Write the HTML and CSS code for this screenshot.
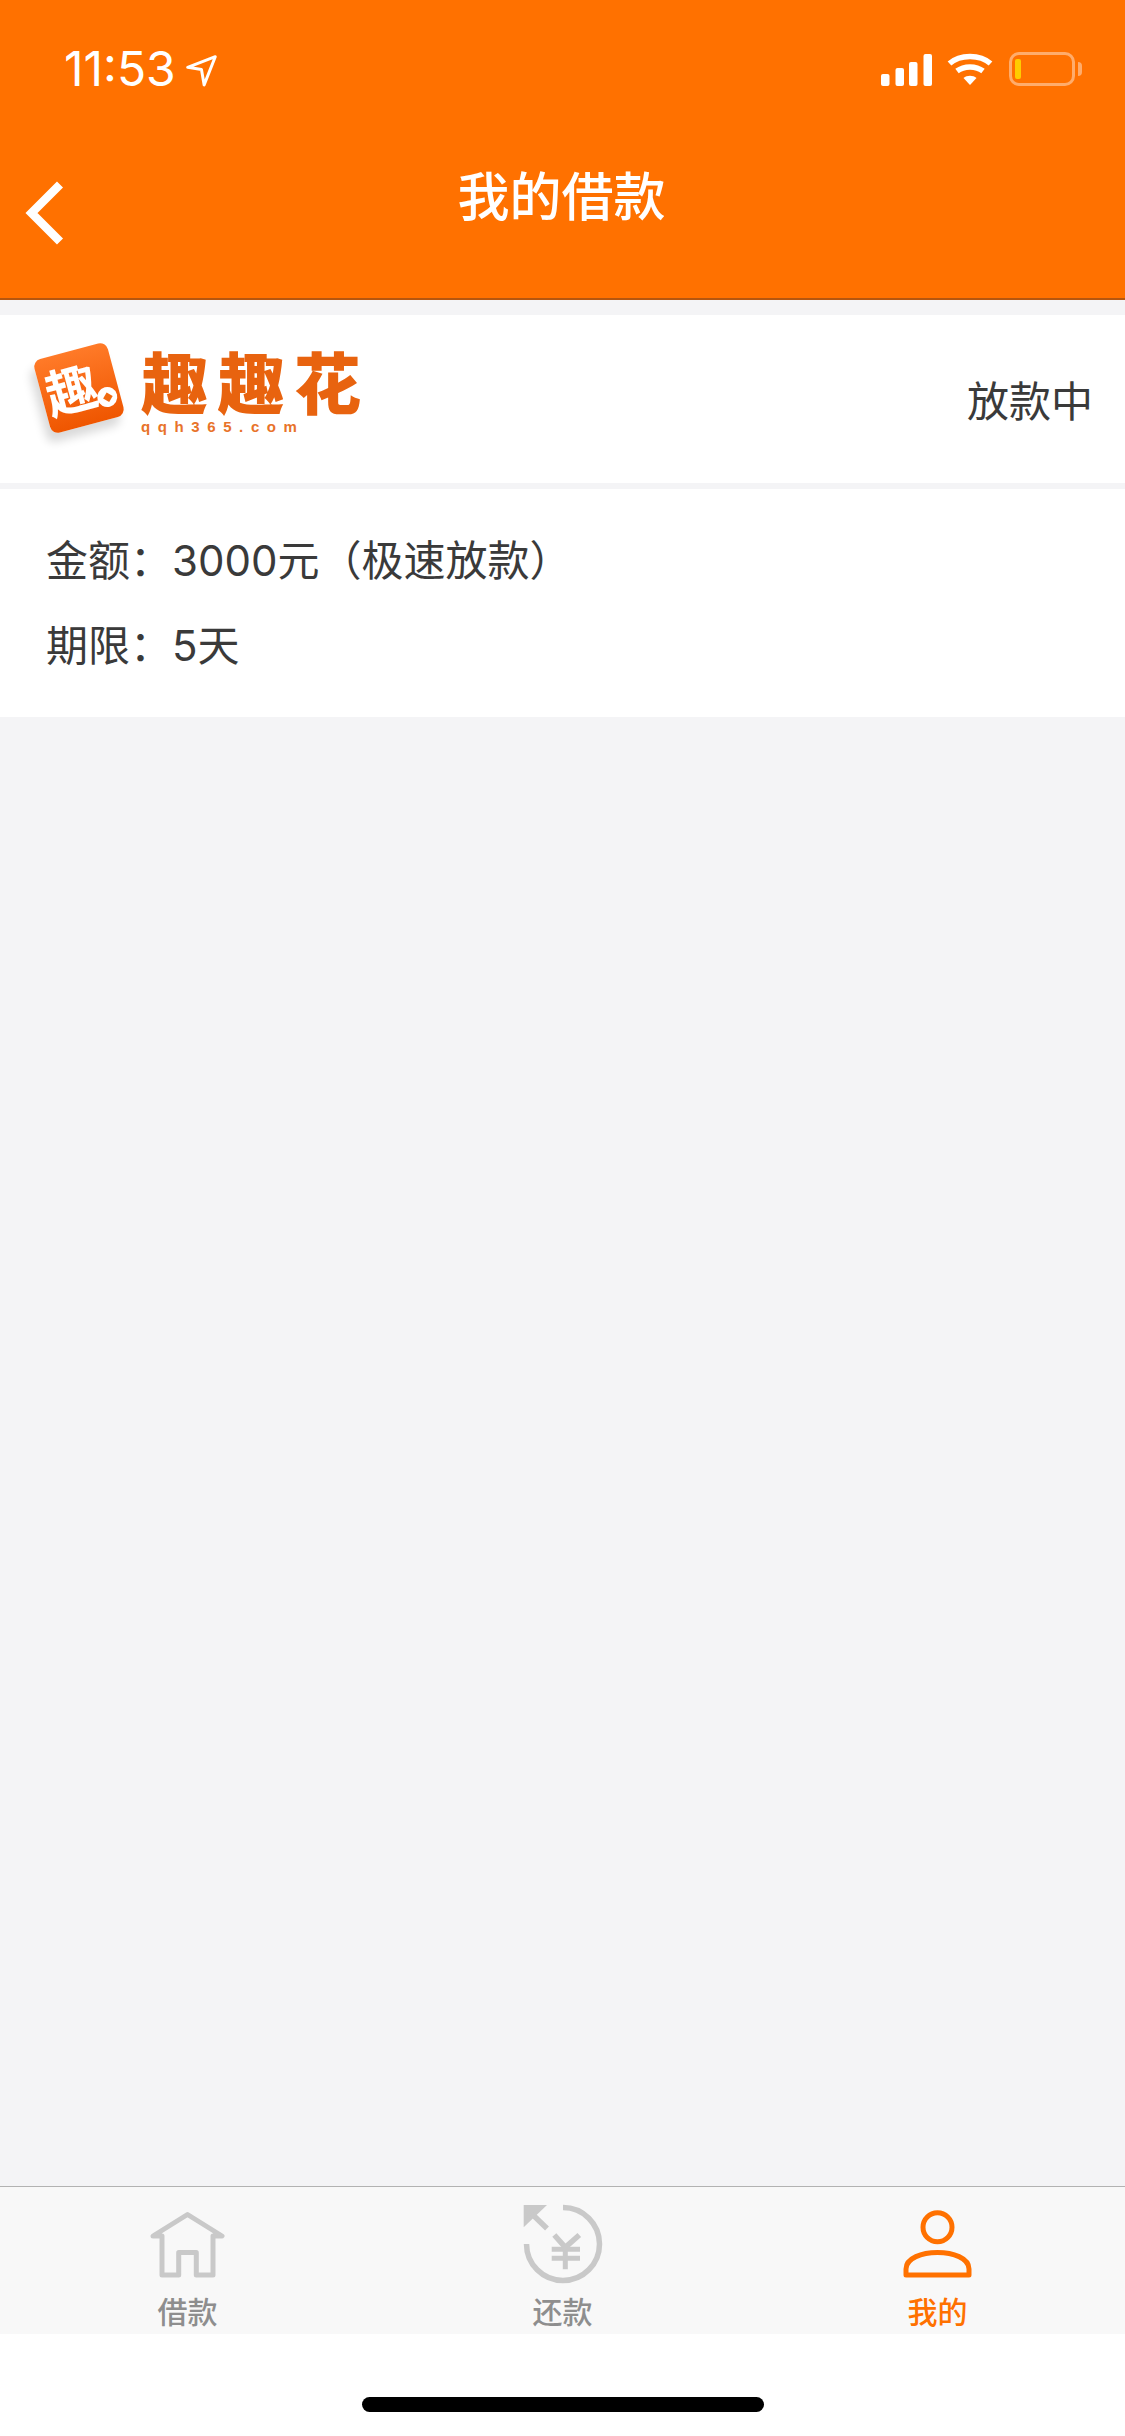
FILE: index.html
```html
<!DOCTYPE html>
<html lang="zh">
<head>
<meta charset="utf-8">
<title>我的借款</title>
<link rel="stylesheet" href="styles.css">
</head>
<body>
<div class="app">
  <header class="header">
    <div class="status">
      <div class="time-wrap">
        <span class="time">11:53</span>
        <svg class="loc" width="34" height="34" viewBox="0 0 32 32"><path d="M2.500 13.500 L28.500 3.500 L18 30 L15.500 15.500 Z" fill="none" stroke="#fff" stroke-width="2.800" stroke-linejoin="round"/></svg>
      </div>
      <div class="indicators">
        <svg class="signal" width="51" height="32" viewBox="0 0 51 32" fill="#fff"><rect x="0" y="20" width="8.500" height="12" rx="2"/><rect x="14.500" y="14" width="8.500" height="18" rx="2"/><rect x="28" y="8" width="8.500" height="24" rx="2"/><rect x="42.500" y="0" width="8.500" height="32" rx="2"/></svg>
        <svg class="wifi" width="46" height="34" viewBox="0 0 46 34" fill="none" stroke="#fff" stroke-width="5.500"><path d="M2.500 11.500 C13 2 33 2 43.500 11.500"/><path d="M10 19 C17 13.500 29 13.500 36 19"/><path d="M16.500 26 L23 33 L29.500 26 C26 23 20 23 16.500 26 Z" fill="#fff" stroke="none"/></svg>
        <div class="battery"><div class="battery-body"><div class="battery-fill"></div></div><div class="battery-nub"></div></div>
      </div>
    </div>
    <div class="nav">
      <svg class="back" width="44" height="70" viewBox="0 0 44 70" fill="none"><path d="M37 4.500 L8.500 33 L37 61.500" stroke="#fff" stroke-width="8.500"/></svg>
      <h1 class="title">我的借款</h1>
      <div></div>
    </div>
  </header>

  <main class="main">
    <section class="brand-row">
      <div class="logo">
        <div class="logo-mark">
          <span class="logo-mark-char">趣</span>
          <span class="logo-coin"><span class="logo-coin-hole"></span></span>
        </div>
        <div class="logo-words">
          <div class="logo-name">趣趣花</div>
          <div class="logo-url">qqh365.com</div>
        </div>
      </div>
      <div class="state">放款中</div>
    </section>
    <section class="details">
      <p class="line">金额：3000元（极速放款）</p>
      <p class="line">期限：5天</p>
    </section>
  </main>

  <nav class="tabs">
    <div class="tab">
      <svg width="90" height="90" viewBox="0 0 90 90" fill="none" stroke="#c9c9c9" stroke-width="5"><path d="M19 36 H10 L44.500 14.500 L79 36 H70 V75 H53.300 V52.500 H35.700 V75 H19 Z" stroke-linejoin="round"/></svg>
      <span class="tab-label">借款</span>
    </div>
    <div class="tab">
      <svg width="90" height="90" viewBox="0 0 90 90" fill="none" stroke="#c9c9c9" stroke-width="5.500"><path d="M45 7.500 A36.500 36.500 0 1 1 8.500 44"/><path d="M5.700 5 H29 L5.700 27.300 Z" fill="#c9c9c9" stroke="none"/><path d="M14 14 L29 28.500"/><path d="M36.300 35 L47.300 47.300 L61.300 35"/><path d="M47.300 47 V69.300 M33.700 49.300 H62 M33.700 58.300 H62" stroke-width="5"/></svg>
      <span class="tab-label">还款</span>
    </div>
    <div class="tab tab-active">
      <svg width="90" height="90" viewBox="0 0 90 90" fill="none" stroke="#ff7100" stroke-width="5"><circle cx="44.500" cy="27.300" r="14.500"/><path d="M13 75 H76 V69 C76 58 60 52.500 44.500 52.500 C29 52.500 13 58 13 69 Z" stroke-linejoin="round"/></svg>
      <span class="tab-label">我的</span>
    </div>
  </nav>

  <footer class="home-area"><div class="home-bar"></div></footer>
</div>
</body>
</html>
```
FILE: styles.css
```css
* { box-sizing: border-box; }
html, body { margin: 0; padding: 0; height: 100%; }
body { background: #f4f4f6; font-family: "Noto Sans CJK SC", "Noto Sans", sans-serif; }
.app { width: 1125px; height: 2436px; display: flex; flex-direction: column; overflow: hidden; }

.header { background: #ff7100; height: 300px; border-bottom: 2px solid #b5560f; padding-top: 52px; flex: none; }
.status { display: flex; justify-content: space-between; height: 34px; padding: 0 43px 0 64px; }
.time-wrap { display: flex; align-items: center; gap: 9px; }
.time { font-family: Inter, "Liberation Sans", sans-serif; font-weight: 400; font-size: 48px; line-height: 34px; color: #fff; letter-spacing: 0; }
.loc { display: block; margin-top: 2px; }
.indicators { display: flex; align-items: center; }
.signal { display: block; margin-top: 2px; }
.wifi { display: block; margin-left: 15px; }
.battery { display: flex; align-items: center; margin-left: 16px; }
.battery-body { width: 66px; height: 34px; border: 3px solid rgba(255,255,255,0.42); border-radius: 10px; padding: 4px 0 4px 3px; }
.battery-fill { width: 6px; height: 100%; background: #ffcc00; border-radius: 2px; }
.battery-nub { width: 4px; height: 14px; margin-left: 3px; background: rgba(255,255,255,0.42); border-radius: 0 7px 7px 0; }

.nav { display: grid; grid-template-columns: 1fr auto 1fr; align-items: center; height: 92px; margin-top: 51px; padding-left: 23px; }
.back { display: block; margin-top: 43px; }
.title { margin: 0 0 0 -25px; font-size: 52px; line-height: 92px; font-weight: 500; color: #fff; text-align: center; }

.main { flex: 1; padding-top: 15px; }
.brand-row { background: #fff; height: 168px; display: flex; justify-content: space-between; align-items: center; padding: 0 32px 0 41px; }
.logo { display: flex; align-items: flex-start; gap: 24px; margin-top: -18px; }
.logo-mark { position: relative; width: 76px; height: 76px; border-radius: 8px; margin-top: 5px; transform: rotate(-15deg); background: linear-gradient(#ff7a28, #ef5600); box-shadow: -6px 8px 10px rgba(0,0,0,0.15); color: #fff; }
.logo-mark-char { display: block; font-size: 52px; line-height: 72px; font-weight: 700; margin-left: 4px; }
.logo-coin { position: absolute; right: 3px; bottom: 12px; width: 20px; height: 20px; border-radius: 50%; background: #fff; display: flex; align-items: center; justify-content: center; }
.logo-coin-hole { width: 7px; height: 7px; background: #f06a10; transform: rotate(45deg); }
.logo-words { display: flex; flex-direction: column; margin-top: -3px; }
.logo-name { font-size: 67px; line-height: 75px; height: 75px; font-weight: 900; letter-spacing: 9.500px; color: #e8630f; white-space: nowrap; }
.logo-url { font-family: "Liberation Sans", sans-serif; font-size: 15px; line-height: 16px; font-weight: 700; letter-spacing: 7.600px; color: #e8732a; margin-top: 2px; }
.state { font-size: 42px; line-height: 60px; color: #3a3a3a; }

.details { background: #fff; margin-top: 6px; height: 228px; padding: 29px 46px 0; }
.line { margin: 0; font-family: Inter, "Noto Sans CJK SC", sans-serif; font-size: 42px; line-height: 85px; color: #3a3a3a; }

.tabs { flex: none; height: 148px; border-top: 1px solid #b2b2b2; background: #f8f8f8; display: grid; grid-template-columns: repeat(3, 1fr); padding-top: 13px; }
.tab { display: flex; flex-direction: column; align-items: center; }
.tab svg { display: block; }
.tab-label { font-size: 30px; line-height: 40px; font-weight: 500; margin-top: 0; color: #8e8e8e; }
.tab-active .tab-label { color: #ff7100; }

.home-area { flex: none; height: 102px; background: #fff; display: flex; justify-content: center; padding: 63px 0 0 1px; }
.home-bar { width: 402px; height: 15px; border-radius: 8px; background: #000; }
```
